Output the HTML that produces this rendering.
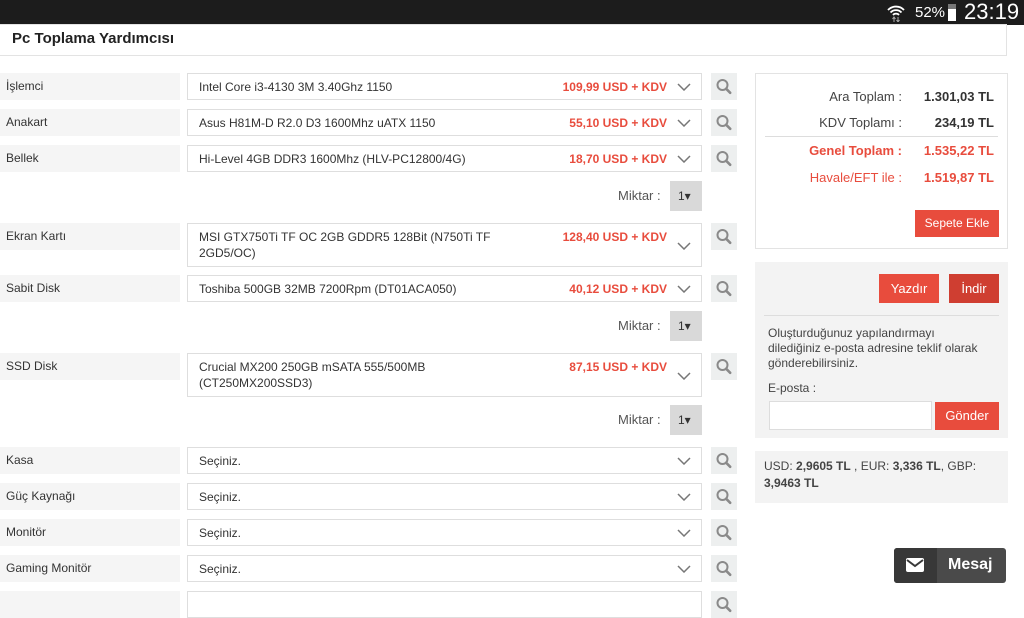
<!DOCTYPE html>
<html><head><meta charset="utf-8"><style>
*{box-sizing:border-box;margin:0;padding:0}
body{width:1024px;height:600px;overflow:hidden;background:#fff;font-family:"Liberation Sans",sans-serif;font-size:12px;color:#333;position:relative}
.abs{position:absolute}
.sb{left:0;top:0;width:1024px;height:25px;background:#1c1c1c;color:#fff}
.title{left:-1px;top:24px;width:1008px;height:32px;border:1px solid #e3e3e3;background:#fff;font-weight:bold;font-size:15px;padding:5px 12px;color:#222}
.lab{left:0;width:180px;height:27px;background:#f5f5f5;padding-left:6px;line-height:27px}
.sel{left:187px;width:515px;border:1px solid #dedede;background:#fff;padding:5px 11px;line-height:16px}
.price{position:absolute;right:34px;top:5px;color:#e84c3d;font-weight:bold}
.chev{position:absolute;right:10px;width:14px;height:8px}
.srch{left:711px;width:26px;height:27px;background:#edefef}
.mik{left:618px;line-height:30px;font-size:13px;color:#555}
.q{left:670px;width:32px;height:30px;background:#d9d9d9;line-height:30px;padding-left:8px;font-size:12px}
.btn{background:#e84c3d;color:#fff;font-size:13px;text-align:center}
</style></head><body>
<div class="abs sb">
<svg class="abs" style="left:887px;top:3px" width="18" height="19" viewBox="0 0 18 19"><path d="M1 7a11 11 0 0 1 16 0M3.5 9.5a7.5 7.5 0 0 1 11 0M6 12a4 4 0 0 1 6 0" stroke="#fff" stroke-width="1.8" fill="none"/><path d="M7 14v5M5.5 16l1.5-2 1.5 2M11 19v-5M9.5 17l1.5 2 1.5-2" stroke="#aaa" stroke-width="1" fill="none"/></svg>
<div class="abs" style="left:915px;top:4px;font-size:15px">52%</div>
<div class="abs" style="left:948px;top:4px;width:8px;height:17px;background:#fff;border-top:5px solid #777"></div>
<div class="abs" style="left:964px;top:-1px;font-size:22px">23:19</div>
</div>
<div class="abs title">Pc Toplama Yardımcısı</div>

<div class="abs lab" style="top:73px">İşlemci</div>
<div class="abs sel" style="top:73px;height:27px">Intel Core i3-4130 3M 3.40Ghz 1150<span class="price">109,99 USD + KDV</span><svg class="chev" style="top:9px" viewBox="0 0 14 8"><path d="M1 1l6 6 6-6" stroke="#777" stroke-width="1.5" fill="none"/></svg></div>
<div class="abs lab" style="top:109px">Anakart</div>
<div class="abs sel" style="top:109px;height:27px">Asus H81M-D R2.0 D3 1600Mhz uATX 1150<span class="price">55,10 USD + KDV</span><svg class="chev" style="top:9px" viewBox="0 0 14 8"><path d="M1 1l6 6 6-6" stroke="#777" stroke-width="1.5" fill="none"/></svg></div>
<div class="abs lab" style="top:145px">Bellek</div>
<div class="abs sel" style="top:145px;height:27px">Hi-Level 4GB DDR3 1600Mhz (HLV-PC12800/4G)<span class="price">18,70 USD + KDV</span><svg class="chev" style="top:9px" viewBox="0 0 14 8"><path d="M1 1l6 6 6-6" stroke="#777" stroke-width="1.5" fill="none"/></svg></div>
<div class="abs mik" style="top:181px">Miktar :</div><div class="abs q" style="top:181px">1▾</div>
<div class="abs lab" style="top:223px">Ekran Kartı</div>
<div class="abs sel" style="top:223px;height:44px;padding-right:200px">MSI GTX750Ti TF OC 2GB GDDR5 128Bit (N750Ti TF 2GD5/OC)<span class="price">128,40 USD + KDV</span><svg class="chev" style="top:18px" viewBox="0 0 14 8"><path d="M1 1l6 6 6-6" stroke="#777" stroke-width="1.5" fill="none"/></svg></div>
<div class="abs lab" style="top:275px">Sabit Disk</div>
<div class="abs sel" style="top:275px;height:27px">Toshiba 500GB 32MB 7200Rpm (DT01ACA050)<span class="price">40,12 USD + KDV</span><svg class="chev" style="top:9px" viewBox="0 0 14 8"><path d="M1 1l6 6 6-6" stroke="#777" stroke-width="1.5" fill="none"/></svg></div>
<div class="abs mik" style="top:311px">Miktar :</div><div class="abs q" style="top:311px">1▾</div>
<div class="abs lab" style="top:353px">SSD Disk</div>
<div class="abs sel" style="top:353px;height:44px;padding-right:260px">Crucial MX200 250GB mSATA 555/500MB (CT250MX200SSD3)<span class="price">87,15 USD + KDV</span><svg class="chev" style="top:18px" viewBox="0 0 14 8"><path d="M1 1l6 6 6-6" stroke="#777" stroke-width="1.5" fill="none"/></svg></div>
<div class="abs mik" style="top:405px">Miktar :</div><div class="abs q" style="top:405px">1▾</div>
<div class="abs lab" style="top:447px">Kasa</div>
<div class="abs sel" style="top:447px;height:27px">Seçiniz.<svg class="chev" style="top:9px" viewBox="0 0 14 8"><path d="M1 1l6 6 6-6" stroke="#777" stroke-width="1.5" fill="none"/></svg></div>
<div class="abs lab" style="top:483px">Güç Kaynağı</div>
<div class="abs sel" style="top:483px;height:27px">Seçiniz.<svg class="chev" style="top:9px" viewBox="0 0 14 8"><path d="M1 1l6 6 6-6" stroke="#777" stroke-width="1.5" fill="none"/></svg></div>
<div class="abs lab" style="top:519px">Monitör</div>
<div class="abs sel" style="top:519px;height:27px">Seçiniz.<svg class="chev" style="top:9px" viewBox="0 0 14 8"><path d="M1 1l6 6 6-6" stroke="#777" stroke-width="1.5" fill="none"/></svg></div>
<div class="abs lab" style="top:555px">Gaming Monitör</div>
<div class="abs sel" style="top:555px;height:27px">Seçiniz.<svg class="chev" style="top:9px" viewBox="0 0 14 8"><path d="M1 1l6 6 6-6" stroke="#777" stroke-width="1.5" fill="none"/></svg></div>
<div class="abs lab" style="top:591px"></div>
<div class="abs sel" style="top:591px;height:27px"></div>

<svg width="0" height="0" style="position:absolute"><defs><symbol id="mg" viewBox="0 0 26 27"><circle cx="11.5" cy="12" r="5" stroke="#8a8a8a" stroke-width="2" fill="none"/><path d="M15.2 15.8l4 4" stroke="#8a8a8a" stroke-width="2.6" stroke-linecap="round"/></symbol></defs></svg>
<svg class="abs srch" style="top:73px"><use href="#mg"/></svg>
<svg class="abs srch" style="top:109px"><use href="#mg"/></svg>
<svg class="abs srch" style="top:145px"><use href="#mg"/></svg>
<svg class="abs srch" style="top:223px"><use href="#mg"/></svg>
<svg class="abs srch" style="top:275px"><use href="#mg"/></svg>
<svg class="abs srch" style="top:353px"><use href="#mg"/></svg>
<svg class="abs srch" style="top:447px"><use href="#mg"/></svg>
<svg class="abs srch" style="top:483px"><use href="#mg"/></svg>
<svg class="abs srch" style="top:519px"><use href="#mg"/></svg>
<svg class="abs srch" style="top:555px"><use href="#mg"/></svg>
<svg class="abs srch" style="top:591px"><use href="#mg"/></svg>

<div class="abs" style="left:755px;top:73px;width:253px;height:176px;border:1px solid #e3e3e3;font-size:13px">
<div class="abs" style="right:105px;top:15px;color:#444">Ara Toplam :</div><div class="abs" style="right:13px;top:15px;font-weight:bold">1.301,03 TL</div>
<div class="abs" style="right:105px;top:41px;color:#444">KDV Toplamı :</div><div class="abs" style="right:13px;top:41px;font-weight:bold">234,19 TL</div>
<div class="abs" style="left:9px;top:62px;width:233px;border-top:1px solid #ddd"></div>
<div class="abs" style="right:105px;top:69px;color:#e84c3d;font-weight:bold">Genel Toplam :</div><div class="abs" style="right:13px;top:69px;font-weight:bold;color:#e84c3d">1.535,22 TL</div>
<div class="abs" style="right:105px;top:96px;color:#e84c3d">Havale/EFT ile :</div><div class="abs" style="right:13px;top:96px;font-weight:bold;color:#e84c3d">1.519,87 TL</div>
<div class="abs btn" style="left:159px;top:136px;width:84px;height:27px;line-height:27px;font-size:12px">Sepete Ekle</div>
</div>
<div class="abs" style="left:755px;top:262px;width:253px;height:176px;background:#f3f3f3">
<div class="abs btn" style="left:124px;top:12px;width:60px;height:29px;line-height:29px">Yazdır</div>
<div class="abs btn" style="left:194px;top:12px;width:50px;height:29px;line-height:29px;background:#cf3e31">İndir</div>
<div class="abs" style="left:9px;top:53px;width:235px;border-top:1px solid #ddd"></div>
<div class="abs" style="left:13px;top:64px;width:222px;line-height:15px;color:#444">Oluşturduğunuz yapılandırmayı dilediğiniz e-posta adresine teklif olarak gönderebilirsiniz.</div>
<div class="abs" style="left:13px;top:119px;color:#444">E-posta :</div>
<div class="abs" style="left:14px;top:139px;width:163px;height:29px;background:#fff;border:1px solid #ddd"></div>
<div class="abs btn" style="left:180px;top:140px;width:64px;height:28px;line-height:28px">Gönder</div>
</div>
<div class="abs" style="left:755px;top:451px;width:253px;height:52px;background:#f3f3f3;padding:7px 9px;line-height:17px;color:#444">USD: <b>2,9605 TL</b> , EUR: <b>3,336 TL</b>, GBP: <b>3,9463 TL</b></div>

<div class="abs" style="left:894px;top:548px;width:112px;height:35px;background:#4a4a4a;border-radius:3px;overflow:hidden">
<div class="abs" style="left:0;top:0;width:43px;height:35px;background:#383838"></div>
<svg class="abs" style="left:12px;top:10px" width="18" height="14" viewBox="0 0 18 14"><rect x="0" y="0" width="18" height="14" rx="2" fill="#fff"/><path d="M1 2l8 6 8-6" stroke="#383838" stroke-width="2" fill="none"/></svg>
<div class="abs" style="left:54px;top:8px;color:#fff;font-weight:bold;font-size:16px">Mesaj</div>
</div>
</body></html>
